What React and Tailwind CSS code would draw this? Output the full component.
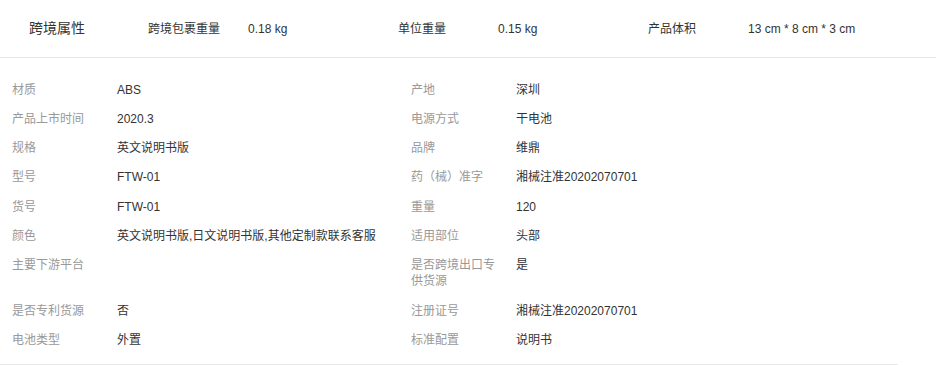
export default function App() {

    const crossBorder = [
        { label: '跨境包裹重量', value: '0.18 kg' },
        { label: '单位重量', value: '0.15 kg' },
        { label: '产品体积', value: '13 cm * 8 cm * 3 cm' },
    ]

    // rows: [left, right]
    const rows = [
        [{ label: '材质', value: 'ABS' }, { label: '产地', value: '深圳' }],
        [{ label: '产品上市时间', value: '2020.3' }, { label: '电源方式', value: '干电池' }],
        [{ label: '规格', value: '英文说明书版' }, { label: '品牌', value: '维鼎' }],
        [{ label: '型号', value: 'FTW-01' }, { label: '药（械）准字', value: '湘械注准20202070701' }],
        [{ label: '货号', value: 'FTW-01' }, { label: '重量', value: '120' }],
        [{ label: '颜色', value: '英文说明书版,日文说明书版,其他定制款联系客服' }, { label: '适用部位', value: '头部' }],
        [{ label: '主要下游平台', value: '' }, { label: '是否跨境出口专供货源', value: '是' }],
        [{ label: '是否专利货源', value: '否' }, { label: '注册证号', value: '湘械注准20202070701' }],
        [{ label: '电池类型', value: '外置' }, { label: '标准配置', value: '说明书' }],
    ]

    const font = { fontFamily: '"Liberation Sans", Arial, "Noto Sans CJK SC", sans-serif' }

    return (
        <div className="w-[936px] bg-white text-[12px] text-[#333]" style={font}>
            {/* cross-border attributes */}
            <div className="flex items-center h-[58px] border-b border-[#e8e8e8]">
                <div className="w-[148px] pl-[29px] text-[14px] text-[#333]">跨境属性</div>
                {crossBorder.map((item) => (
                    <div key={item.label} className="flex w-[250px]">
                        <span className="w-[100px] text-[#333]">{item.label}</span>
                        <span className="text-[#333]">{item.value}</span>
                    </div>
                ))}
            </div>

            {/* product attributes */}
            <div className="w-[898px] pt-[17px] pb-[9px] pl-[12px] border-b border-[#e8e8e8]">
                {rows.map((pair, i) => (
                    <div key={i} className="flex">
                        {pair.map((item) => (
                            <div key={item.label} className="flex w-[399px] py-[6.65px] leading-[16px]">
                                <span className="w-[105px] shrink-0 pr-[10px] text-[#999]">{item.label}</span>
                                <span className="text-[#333]">{item.value}</span>
                            </div>
                        ))}
                    </div>
                ))}
            </div>
        </div>
    )
}
